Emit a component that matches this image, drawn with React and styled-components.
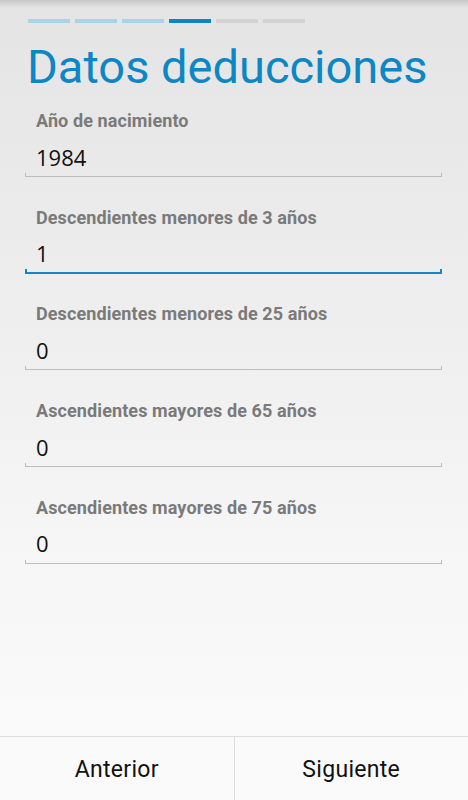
import React from "react";
import styled, { createGlobalStyle } from "styled-components";

const Global = createGlobalStyle`
  html, body { margin: 0; padding: 0; }
  body { font-family: Roboto, "Noto Sans", sans-serif; }
`;

const Screen = styled.div`
  width: 468px;
  height: 800px;
  display: flex;
  flex-direction: column;
  background: linear-gradient(#e4e4e4 0px, #ececec 250px, #f6f6f6 550px, #fafafa 736px);
  position: relative;
  overflow: hidden;
  &::before {
    content: "";
    position: absolute;
    left: 0; right: 0; top: 0;
    height: 8px;
    background: linear-gradient(rgba(0,0,0,0.12), rgba(0,0,0,0));
  }
`;

const Content = styled.div`
  flex: 1;
  display: flex;
  flex-direction: column;
`;

const Steps = styled.div`
  display: flex;
  gap: 5px;
  padding: 19px 0 0 28px;
`;

const Step = styled.div`
  width: 42px;
  height: 4px;
  background: ${p => (p.$state === "done" ? "#a9d3e7" : p.$state === "active" ? "#0d85c5" : "#d2d2d2")};
`;

const Title = styled.h1`
  margin: 20px 0 0 27px;
  font-family: Roboto, sans-serif;
  font-weight: 400;
  font-size: 47px;
  line-height: 48px;
  color: #0d86c5;
`;

const Form = styled.div`
  display: flex;
  flex-direction: column;
  padding: 19px 26px 0 25px;
`;

const Field = styled.div`
  height: 96.7px;
  display: flex;
  flex-direction: column;
`;

const Label = styled.div`
  margin-left: 11px;
  font-family: Roboto, sans-serif;
  font-weight: 700;
  font-size: 18px;
  line-height: 21px;
  letter-spacing: 0.1px;
  color: #7a7a7a;
`;

const Value = styled.div`
  margin: 10.5px 0 0 11px;
  font-family: "Open Sans", "DejaVu Sans", sans-serif;
  font-size: 22px;
  line-height: 30px;
  color: #111;
`;

const Line = styled.div`
  position: relative;
  margin-top: ${p => (p.$focused ? "4px" : "4.5px")};
  height: ${p => (p.$focused ? "2px" : "1px")};
  background: ${p => (p.$focused ? "#1985c4" : "#bdbdbd")};
  &::before, &::after {
    content: "";
    position: absolute;
    bottom: 0;
    width: ${p => (p.$focused ? "2px" : "1px")};
    height: ${p => (p.$focused ? "5px" : "4px")};
    background: inherit;
  }
  &::before { left: 0; }
  &::after { right: 0; }
`;

const Footer = styled.div`
  height: 63px;
  display: flex;
  border-top: 1px solid #dedede;
  background: #fafafa;
`;

const FooterButton = styled.button`
  flex: 1;
  border: none;
  background: transparent;
  font-family: Roboto, sans-serif;
  font-size: 23px;
  letter-spacing: 0.3px;
  color: #111;
  padding: 2px 0 0;
  & + & { border-left: 1px solid #dcdcdc; }
`;

const fields = [
  { label: "Año de nacimiento", value: "1984" },
  { label: "Descendientes menores de 3 años", value: "1", focused: true },
  { label: "Descendientes menores de 25 años", value: "0" },
  { label: "Ascendientes mayores de 65 años", value: "0" },
  { label: "Ascendientes mayores de 75 años", value: "0" },
];

const steps = ["done", "done", "done", "active", "todo", "todo"];

export default function App() {
  return (
    <>
      <Global />
      <Screen>
        <Content>
          <Steps>
            {steps.map((s, i) => (
              <Step key={i} $state={s} />
            ))}
          </Steps>
          <Title>Datos deducciones</Title>
          <Form>
            {fields.map(f => (
              <Field key={f.label}>
                <Label>{f.label}</Label>
                <Value>{f.value}</Value>
                <Line $focused={f.focused} />
              </Field>
            ))}
          </Form>
        </Content>
        <Footer>
          <FooterButton>Anterior</FooterButton>
          <FooterButton>Siguiente</FooterButton>
        </Footer>
      </Screen>
    </>
  );
}
